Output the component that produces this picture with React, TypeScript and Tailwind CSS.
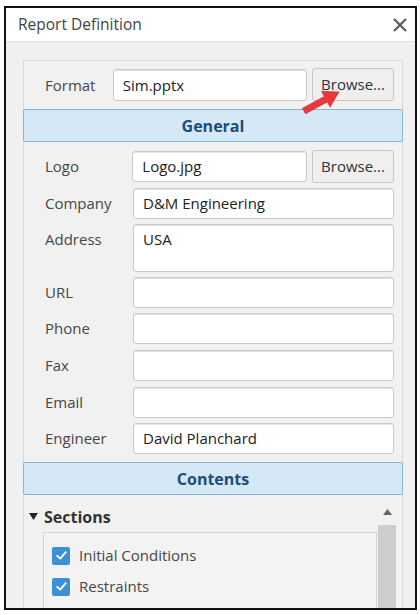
import React from "react";

const font = { fontFamily: '"Open Sans", "Noto Sans", sans-serif' };

function Input({ value, className = "" }: { value?: string; className?: string }) {
  return (
    <div
      className={
        "bg-white border border-[#c9c9c9] rounded-[3px] pl-[9px] text-[15px] text-[#222] leading-[29px] shadow-[inset_0_1px_0_#e4e4e4] " +
        className
      }
    >
      {value}
    </div>
  );
}

function Browse() {
  return (
    <div className="w-[82px] h-[33px] border border-[#c6c6c6] rounded-[3px] bg-[#efefef] flex items-center justify-center text-[15px] text-[#333]">
      Browse...
    </div>
  );
}

function Header({ text }: { text: string }) {
  return (
    <div className="mx-[-1px] h-[33px] bg-[#d5e8f6] border border-[#86b5da] rounded-[2px] flex items-center justify-center text-[16px] font-bold text-[#1d4d78]">
      {text}
    </div>
  );
}

function Row({ label, children, className = "" }: { label: string; children: React.ReactNode; className?: string }) {
  return (
    <div className={"flex pl-[21px] pr-[8px] " + className}>
      <div className="w-[88px] text-[15px] text-[#474747] leading-[31px]">{label}</div>
      <div className="flex-1">{children}</div>
    </div>
  );
}

function Check({ label }: { label?: string }) {
  return (
    <div className="flex items-center h-[31px]">
      <div className="w-[18px] h-[18px] bg-[#3d8fd6] rounded-[2px] flex items-center justify-center">
        <svg width="13" height="13" viewBox="0 0 13 13">
          <path d="M2.2 6.8 L5.2 9.6 L10.8 3.2" stroke="#fff" strokeWidth="1.8" fill="none" strokeLinecap="round" strokeLinejoin="round" />
        </svg>
      </div>
      {label && <span className="ml-[9px] text-[15px] text-[#474747]">{label}</span>}
    </div>
  );
}

export default function App() {
  return (
    <div className="w-[420px] h-[615px] bg-white relative overflow-hidden" style={font}>
      <div className="absolute left-[4px] top-[6px] w-[413px] h-[604px] border-2 border-[#111] bg-[#f0f0f0] overflow-hidden flex flex-col">
        {/* title bar */}
        <div className="h-[34px] bg-white border-b border-[#dedede] flex items-center justify-between pl-[12px] pr-[7px] shrink-0">
          <span className="text-[15.5px] text-[#444]">Report Definition</span>
          <svg width="16" height="16" viewBox="0 0 16 16">
            <path d="M2 2 L14 14 M14 2 L2 14" stroke="#5a5a5a" strokeWidth="2.2" />
          </svg>
        </div>
        <div className="pt-[18px] pl-[17px] pr-[12px] flex-1">
          <div className="border border-[#d8d8d8] bg-[#f1f1f1] w-[380px] h-[600px] pt-[7px]">
            {/* Format */}
            <div className="flex items-center pl-[21px] pr-[8px] h-[33px]">
              <div className="w-[68px] text-[15px] text-[#474747] pt-[2px]">Format</div>
              <Input value="Sim.pptx" className="w-[195px] h-[32px] !leading-[30px]" />
              <div className="ml-[5px]">
                <Browse />
              </div>
            </div>
            <div className="mt-[8px]">
              <Header text="General" />
            </div>
            <div className="flex items-center pl-[21px] pr-[8px] h-[33px] mt-[8px]">
              <div className="w-[88px] text-[15px] text-[#474747]">Logo</div>
              <Input value="Logo.jpg" className="w-[176px] h-[31px]" />
              <div className="ml-[5px]">
                <Browse />
              </div>
            </div>
            <Row label="Company" className="mt-[5px]">
              <Input value="D&M Engineering" className="h-[31px]" />
            </Row>
            <Row label="Address" className="mt-[5px]">
              <Input value="USA" className="h-[48px] !leading-[28px]" />
            </Row>
            <Row label="URL" className="mt-[5px]">
              <Input className="h-[31px]" />
            </Row>
            <Row label="Phone" className="mt-[5px]">
              <Input className="h-[31px]" />
            </Row>
            <Row label="Fax" className="mt-[6px]">
              <Input className="h-[31px]" />
            </Row>
            <Row label="Email" className="mt-[6px]">
              <Input className="h-[31px]" />
            </Row>
            <Row label="Engineer" className="mt-[5px]">
              <Input value="David Planchard" className="h-[31px]" />
            </Row>
            <div className="mt-[8px]">
              <Header text="Contents" />
            </div>
            <div className="flex">
              <div className="flex-1">
                <div className="flex items-center h-[37px] pt-[6px] pl-[5px]">
                  <svg width="9" height="8" viewBox="0 0 9 8">
                    <path d="M0 0 L9 0 L4.5 7 Z" fill="#222" />
                  </svg>
                  <span className="ml-[6px] text-[16px] font-bold text-[#333]">Sections</span>
                </div>
                <div className="ml-[19px] w-[334px] h-[120px] border border-[#d4d4d4] bg-[#f3f3f3] pl-[8px] pt-[7px]">
                  <Check label="Initial Conditions" />
                  <Check label="Restraints" />
                  <Check />
                </div>
              </div>
              <div className="w-[18px] mr-[6px] flex flex-col items-center">
                <svg width="9" height="6" viewBox="0 0 9 6" className="mt-[14px]">
                  <path d="M0 6 L9 6 L4.5 0 Z" fill="#666" />
                </svg>
                <div className="mt-[10px] w-[18px] h-[120px] bg-[#cdcdcd]" />
              </div>
            </div>
          </div>
        </div>
      </div>
      {/* red annotation arrow */}
      <svg className="absolute left-[295px] top-[85px]" width="50" height="35" viewBox="0 0 50 35">
        <path
          d="M10.5 28.8 L7.5 23.2 L29.3 11.4 L26.5 6.3 L44 7 L35.1 22.1 L32.3 17 Z"
          fill="#e8383b"
          stroke="#c62828"
          strokeWidth="0.6"
          strokeLinejoin="round"
        />
      </svg>
    </div>
  );
}
